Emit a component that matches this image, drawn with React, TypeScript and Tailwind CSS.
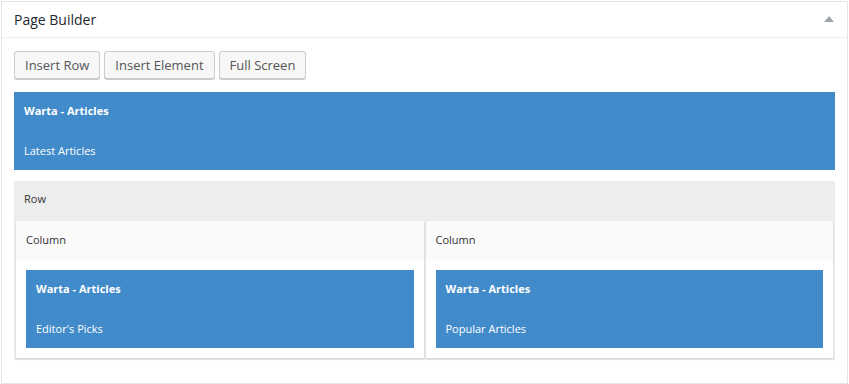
import React from 'react';

const font = { fontFamily: '"Open Sans", "Noto Sans", sans-serif' };

function Element({ title, name }: { title: string; name: string }) {
  return (
    <div className="bg-[#428bca] text-white">
      <div className="h-[39px] flex items-center pl-[10px] text-[11px] font-bold">{title}</div>
      <div className="h-[39px] flex items-center pl-[10px] pt-px text-[11px]">{name}</div>
    </div>
  );
}

function Column({ children }: { children: React.ReactNode }) {
  return (
    <div className="flex-1 bg-white shadow-[0_1px_2px_rgba(0,0,0,0.12)]">
      <div className="h-[39px] flex items-center pl-[10px] bg-[#fafafa] text-[11px] text-[#333]">Column</div>
      <div className="p-[10px]">{children}</div>
    </div>
  );
}

export default function App() {
  return (
    <div className="pl-px pt-px bg-white w-[849px] h-[384px]" style={font}>
      <div className="w-[847px] h-[383px] border border-[#e5e5e5] bg-white">
        <div className="h-[36px] flex items-center justify-between px-3 border-b border-[#eeeeee]">
          <span className="text-[14px] text-[#23282d]">Page Builder</span>
          <svg width="10" height="6" viewBox="0 0 10 6" className="mr-[1px] mb-[2px]">
            <polygon points="5,0 10,6 0,6" fill="#a0a5aa" />
          </svg>
        </div>
        <div className="px-3 pt-[13px]">
          <div className="flex gap-1">
            {['Insert Row', 'Insert Element', 'Full Screen'].map((b) => (
              <button
                key={b}
                className="h-[28px] px-[10px] pt-px text-[13px] text-[#555] bg-[#f7f7f7] border border-[#cccccc] rounded-[3px] shadow-[0_1px_0_#cccccc]"
              >
                {b}
              </button>
            ))}
          </div>
          <div className="mt-[13px]">
            <Element title="Warta - Articles" name="Latest Articles" />
          </div>
          <div className="mt-[11px] bg-[#ededed] px-[2px] pb-[2px]">
            <div className="h-[40px] flex items-center pl-[8px] pb-[3px] text-[11px] text-[#333]">Row</div>
            <div className="flex gap-[2px]">
              <Column>
                <Element title="Warta - Articles" name="Editor's Picks" />
              </Column>
              <Column>
                <Element title="Warta - Articles" name="Popular Articles" />
              </Column>
            </div>
          </div>
        </div>
      </div>
    </div>
  );
}
